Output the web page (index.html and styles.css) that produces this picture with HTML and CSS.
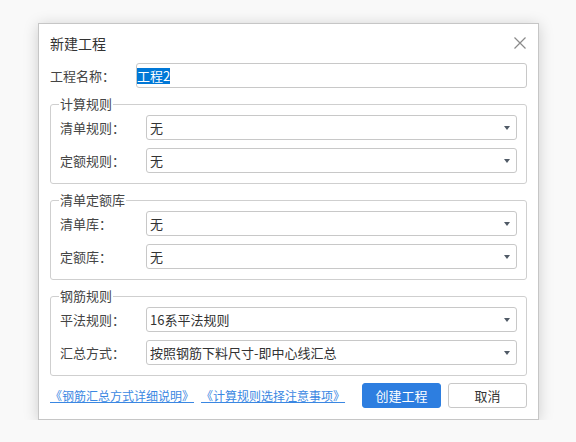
FILE: index.html
```html
<!DOCTYPE html>
<html lang="zh-CN">
<head>
    <meta charset="UTF-8">
    <title>新建工程</title>
    <link rel="stylesheet" href="styles.css">
</head>
<body>
    <div class="dialog">
        <div class="header">
            <span class="titulo">新建工程</span>
            <span class="close">
                <svg width="12" height="12" viewBox="0 0 12 12"><path d="M0.5 0.5L11.5 11.5M11.5 0.5L0.5 11.5" stroke="#8a8a8a" stroke-width="1.2" fill="none"/></svg>
            </span>
        </div>

        <div class="name-row">
            <label for="nome">工程名称：</label>
            <div class="input"><span class="sel">工程2</span></div>
        </div>

        <div class="group">
            <span class="group-title">计算规则</span>
            <div class="row">
                <label>清单规则：</label>
                <div class="select">无</div>
            </div>
            <div class="row">
                <label>定额规则：</label>
                <div class="select">无</div>
            </div>
        </div>

        <div class="group">
            <span class="group-title">清单定额库</span>
            <div class="row">
                <label>清单库：</label>
                <div class="select">无</div>
            </div>
            <div class="row">
                <label>定额库：</label>
                <div class="select">无</div>
            </div>
        </div>

        <div class="group">
            <span class="group-title">钢筋规则</span>
            <div class="row">
                <label>平法规则：</label>
                <div class="select">16系平法规则</div>
            </div>
            <div class="row">
                <label>汇总方式：</label>
                <div class="select">按照钢筋下料尺寸-即中心线汇总</div>
            </div>
        </div>

        <div class="footer">
            <a href="#" class="link">《钢筋汇总方式详细说明》</a>
            <a href="#" class="link">《计算规则选择注意事项》</a>
            <span class="spacer"></span>
            <button class="button primary">创建工程</button>
            <button class="button">取消</button>
        </div>
    </div>
</body>
</html>
```

FILE: styles.css
```css
* {
    box-sizing: border-box;
}

body {
    margin: 0;
    padding: 23px 0 0 38px;
    background-color: #f9f9f9;
    font-family: "Microsoft YaHei", "Noto Sans CJK SC", sans-serif;
    font-size: 13px;
    color: #333333;
}

.dialog {
    width: 501px;
    height: 397px;
    background-color: #ffffff;
    border: 1px solid #c6c6c6;
    box-shadow: 0 2px 14px rgba(0, 0, 0, 0.18);
    padding: 0 11px;
}

.header {
    height: 39px;
    display: flex;
    align-items: center;
    justify-content: space-between;
}

.titulo {
    font-size: 14px;
    color: #333333;
    margin-top: -1px;
}

.close {
    display: flex;
    margin-right: 1px;
    margin-top: -2px;
}

.name-row {
    display: flex;
    align-items: center;
    height: 25px;
}

.name-row label {
    width: 86px;
    color: #444444;
}

.input {
    flex: 1;
    height: 25px;
    border: 1px solid #c8c8c8;
    border-radius: 3px;
    padding-left: 0;
    display: flex;
    align-items: center;
}

.sel {
    background-color: #0078d7;
    color: #ffffff;
    line-height: 16px;
}

.group {
    position: relative;
    margin-top: 16px;
    height: 80px;
    border: 1px solid #cfcfcf;
    border-radius: 3px;
    padding: 10px 9px 10px 9px;
}

.group-title {
    position: absolute;
    top: -9px;
    left: 8px;
    padding: 0 1px;
    line-height: 16px;
    background-color: #ffffff;
    color: #444444;
}

.row {
    display: flex;
    align-items: center;
    height: 25px;
}

.row + .row {
    margin-top: 8px;
}

.row label {
    width: 86px;
    color: #444444;
}

.select {
    position: relative;
    flex: 1;
    height: 25px;
    line-height: 23px;
    border: 1px solid #c8c8c8;
    border-radius: 3px;
    padding-left: 3px;
    color: #333333;
}

.select::after {
    content: "";
    position: absolute;
    right: 6px;
    top: 10px;
    border-left: 3px solid transparent;
    border-right: 3px solid transparent;
    border-top: 4px solid #505a66;
}

.footer {
    display: flex;
    align-items: center;
    margin-top: 7px;
    height: 25px;
}

.link {
    font-size: 12px;
    color: #3a87e2;
    text-decoration: underline;
    margin-right: 7px;
    line-height: 16px;
    margin-top: 1px;
}

.spacer {
    flex: 1;
}

.button {
    width: 79px;
    height: 25px;
    border: 1px solid #c8c8c8;
    border-radius: 3px;
    background-color: #ffffff;
    color: #333333;
    font-family: inherit;
    font-size: 13px;
    padding: 0;
    cursor: pointer;
}

.button + .button {
    margin-left: 7px;
}

.primary {
    background-color: #2d7ee0;
    border-color: #2d7ee0;
    color: #ffffff;
}
```
